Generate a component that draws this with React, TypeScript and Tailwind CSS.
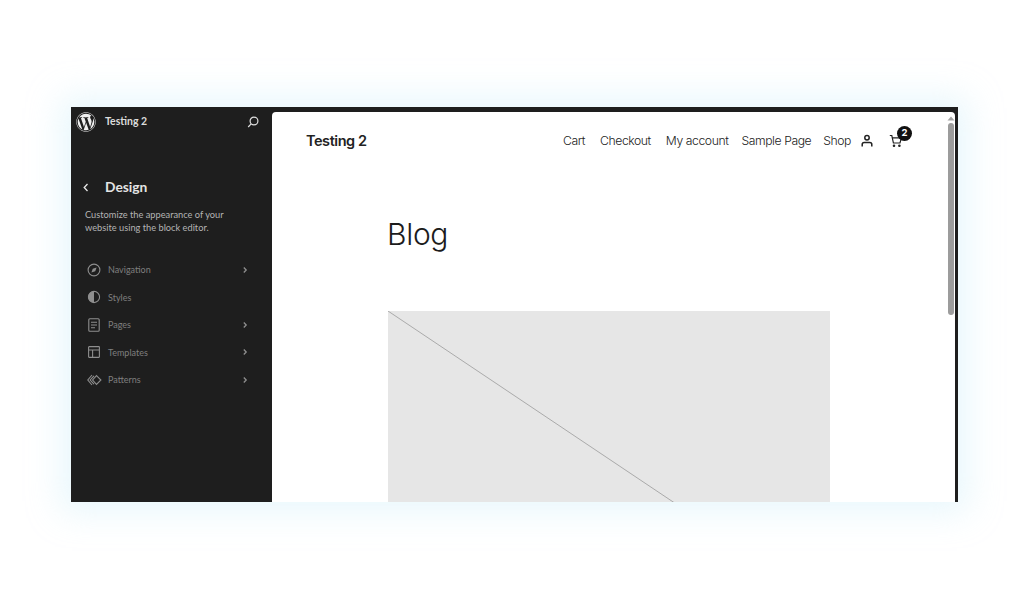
import React from "react";
import { FaWordpress } from "react-icons/fa";

const Chevron = () => (
  <svg className="block" width="6" height="8" viewBox="0 0 6 8" fill="none" stroke="#8f8f8f" strokeWidth="1.3">
    <path d="M1.8 1.5 L4.2 4 L1.8 6.5" />
  </svg>
);

const NavIcon = () => (
  <svg width="14" height="14" viewBox="0 0 14 14" fill="none" stroke="#8e8e8e" strokeWidth="1.1">
    <circle cx="7" cy="7" r="5.9" />
    <path d="M4.4 9.6 L5.8 5.8 L9.6 4.4 L8.2 8.2 Z" fill="#8e8e8e" stroke="none" />
  </svg>
);
const StylesIcon = () => (
  <svg width="14" height="14" viewBox="0 0 14 14" fill="none" stroke="#8e8e8e" strokeWidth="1.1">
    <circle cx="7" cy="7" r="5.6" />
    <path d="M7 1.2 A5.8 5.8 0 0 0 7 12.8 Z" fill="#8e8e8e" stroke="none" />
  </svg>
);
const PagesIcon = () => (
  <svg width="12" height="14" viewBox="0 0 12 14" fill="none" stroke="#8e8e8e" strokeWidth="1.1">
    <rect x="0.8" y="0.8" width="10.4" height="12.4" rx="1" />
    <path d="M3 4.2 H9 M3 7 H9 M3 9.8 H7" />
  </svg>
);
const TemplatesIcon = () => (
  <svg width="12" height="12" viewBox="0 0 12 12" fill="none" stroke="#8e8e8e" strokeWidth="1.1">
    <rect x="0.6" y="0.6" width="10.8" height="10.8" rx="0.6" />
    <path d="M0.6 4 H11.4 M4.6 4 V11.4" />
  </svg>
);
const PatternsIcon = () => (
  <svg width="15" height="12" viewBox="0 0 15 12" fill="none" stroke="#8e8e8e" strokeWidth="1.1">
    <path d="M5 1 L0.8 6 L5 11" />
    <path d="M7 1.8 L3.2 6 L7 10.2" />
    <path d="M9.5 1.6 L13.9 6 L9.5 10.4 L5.6 6 Z" />
  </svg>
);

const items = [
  { label: "Navigation", icon: <NavIcon />, more: true },
  { label: "Styles", icon: <StylesIcon />, more: false },
  { label: "Pages", icon: <PagesIcon />, more: true },
  { label: "Templates", icon: <TemplatesIcon />, more: true },
  { label: "Patterns", icon: <PatternsIcon />, more: true },
];

const links = [
  { label: "Cart", cls: "mr-[2px]" },
  { label: "Checkout", cls: "mr-[2px]" },
  { label: "My account", cls: "" },
  { label: "Sample Page", cls: "mr-[-1px]" },
  { label: "Shop", cls: "" },
];

export default function App() {
  return (
    <div className="w-[1024px] h-[598px] bg-white overflow-hidden pt-[107px] pl-[71px]">
      <div className="w-[887px] h-[395px] flex bg-[#1e1e1e] shadow-[0_0_32px_10px_rgba(190,232,245,0.35)] font-['Lato',sans-serif]">
        <aside className="w-[201px] shrink-0 flex flex-col text-white">
          <div className="h-[29px] flex items-center pl-[5px] pr-[12px]">
            <FaWordpress className="w-[20px] h-[20px] text-[#f0f0f0]" />
            <span className="ml-[9px] text-[10.5px] font-bold text-[#dcdcdc]">Testing 2</span>
            <svg className="ml-auto" width="14" height="14" viewBox="0 0 14 14" fill="none" stroke="#e0e0e0" strokeWidth="1.2">
              <circle cx="8" cy="6" r="3.9" />
              <path d="M5.2 8.9 L2.2 12" />
            </svg>
          </div>
          <div className="mt-[39px] h-[24px] flex items-center pl-[11px]">
            <svg width="8" height="11" viewBox="0 0 8 11" fill="none" stroke="#e8e8e8" strokeWidth="1.3">
              <path d="M5.5 2 L2.2 5.5 L5.5 9" />
            </svg>
            <span className="ml-[15px] text-[13.8px] font-bold text-[#e4e4e4]">Design</span>
          </div>
          <p className="mt-[9px] pl-[14px] text-[9.25px] leading-[13px] text-[#b4b4b4]">
            Customize the appearance of your
            <br />
            website using the block editor.
          </p>
          <nav className="mt-[22px] flex flex-col">
            {items.map((it) => (
              <div key={it.label} className="h-[27.5px] flex items-center pl-[15px] pr-[24px]">
                <span className="w-[16px] flex justify-center">{it.icon}</span>
                <span className="ml-[6px] text-[9px] text-[#7f7f7f]">{it.label}</span>
                {it.more && (
                  <span className="ml-auto">
                    <Chevron />
                  </span>
                )}
              </div>
            ))}
          </nav>
        </aside>

        <main className="w-[683px] mt-[5px] bg-white rounded-tl-[4px] rounded-tr-[4px] overflow-hidden flex font-['Inter',sans-serif]">
          <div className="w-[674px] shrink-0 overflow-hidden">
            <header className="h-[58px] flex items-center pl-[34px] pr-[43px]">
              <span className="text-[14.5px] font-semibold tracking-[-0.45px] text-[#222]">Testing 2</span>
              <nav className="ml-auto flex items-center gap-[13px] text-[12.2px] font-light tracking-[-0.42px] text-[#222]">
                {links.map((l) => (
                  <span key={l.label} className={l.cls}>
                    {l.label}
                  </span>
                ))}
              </nav>
              <svg className="ml-[9px]" width="14" height="14" viewBox="0 0 14 14" fill="none" stroke="#222" strokeWidth="1.5">
                <circle cx="7" cy="3.8" r="2.2" />
                <path d="M2.2 12.5 V10.5 Q2.2 8.6 4.2 8.6 H9.8 Q11.8 8.6 11.8 10.5 V12.5" />
              </svg>
              <div className="relative ml-[15px] w-[14px] h-[14px]">
                <svg width="14" height="14" viewBox="0 0 14 14" fill="none" stroke="#222" strokeWidth="1.2">
                  <path d="M0.8 1.5 H2.8 L4.4 9 H11 L12.4 3.8 H3.4" />
                  <circle cx="5" cy="11.8" r="0.7" fill="#222" />
                  <circle cx="10.4" cy="11.8" r="0.7" fill="#222" />
                </svg>
                <span className="absolute left-[8px] top-[-8px] w-[15px] h-[15px] rounded-full bg-[#111] text-white text-[9.5px] font-bold flex items-center justify-center">
                  2
                </span>
              </div>
            </header>
            <h1 className="ml-[115px] mt-[42px] text-[30px] leading-[44px] font-light tracking-[-0.3px] text-[#1c1c1c]">
              Blog
            </h1>
            <div className="ml-[116px] mt-[55px] w-[442px] h-[296px] bg-[#e6e6e6]">
              <svg className="w-full h-full block" viewBox="0 0 442 296" fill="none">
                <path d="M0 0 L442 296" stroke="#9b9b9b" strokeWidth="0.8" />
              </svg>
            </div>
          </div>
          <div className="w-[9px] shrink-0 flex flex-col items-center">
            <svg className="mt-[4px]" width="8" height="5" viewBox="0 0 8 5">
              <path d="M4 0.5 L7.5 4.5 H0.5 Z" fill="#a3a3a3" />
            </svg>
            <div className="mt-[2px] w-[6px] h-[192px] rounded-[3px] bg-[#9c9c9c]" />
          </div>
        </main>
      </div>
    </div>
  );
}
